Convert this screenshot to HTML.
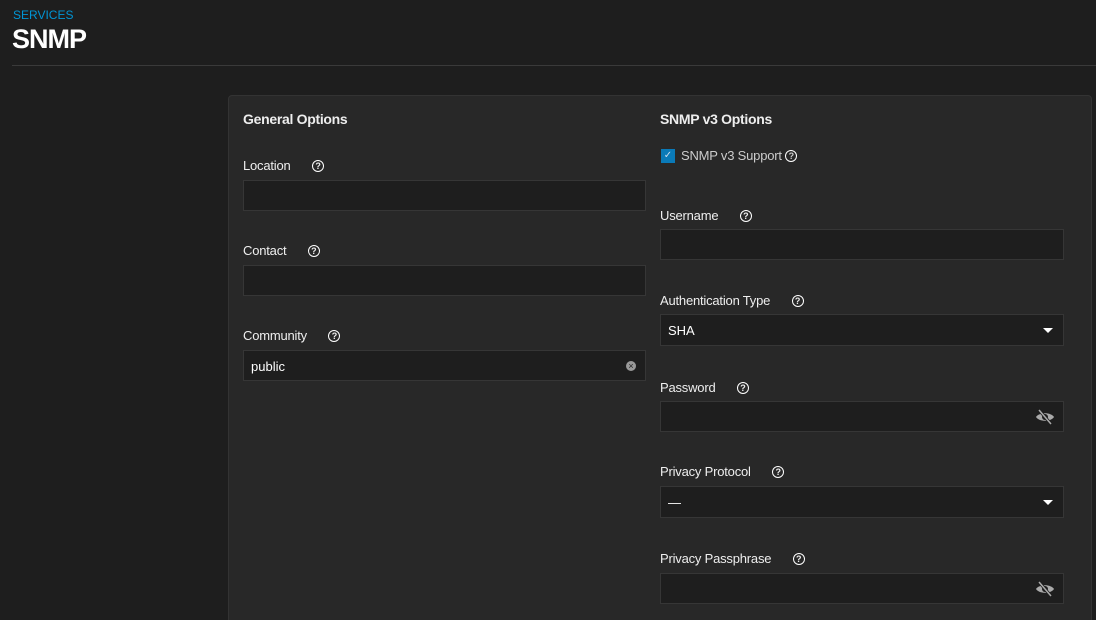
<!DOCTYPE html>
<html style="overflow:hidden;height:620px"><head><style>
body{margin:0;width:1096px;height:620px;background:#1e1e1e;font-family:"Liberation Sans",sans-serif;color:#fff;overflow:hidden;position:relative}
.a{position:absolute}
.sv{left:13px;top:8px;font-size:12px;color:#0095d5}
.t{left:12px;top:24px;font-size:27px;font-weight:bold;letter-spacing:-1px}
.hr{left:12px;top:65px;width:1084px;height:1px;background:#3a3a3a}
.card{left:228px;top:95px;width:862px;height:540px;background:#282828;border:1px solid #333;border-radius:4px}
.h{font-size:14px;font-weight:bold;color:#eee;letter-spacing:-.3px}
.l{font-size:13px;color:#eee;letter-spacing:-.2px}
.q{display:inline-block;width:10px;height:10px;border:1.5px solid #fff;border-radius:50%;font-size:9px;line-height:10px;text-align:center;font-weight:bold;vertical-align:1px}
.in{background:#1e1e1e;border:1px solid #363636;height:29px;box-sizing:border-box}
.v{font-size:13px;color:#fff;padding:8px 7px}
.arr{position:absolute;right:10px;top:13px;border-left:5px solid transparent;border-right:5px solid transparent;border-top:5px solid #fff}
</style></head><body>
<div class="a sv">SERVICES</div>
<div class="a t">SNMP</div>
<div class="a hr"></div>
<div class="a card"></div>
<div class="a h" style="left:243px;top:111px">General Options</div>
<div class="a l" style="left:243px;top:158px">Location <span class="q" style="margin-left:18px">?</span></div>
<div class="a in" style="left:243px;top:180px;width:403px;height:31px"></div>
<div class="a l" style="left:243px;top:243px">Contact <span class="q" style="margin-left:18px">?</span></div>
<div class="a in" style="left:243px;top:265px;width:403px;height:31px"></div>
<div class="a l" style="left:243px;top:328px">Community <span class="q" style="margin-left:18px">?</span></div>
<div class="a in v" style="left:243px;top:350px;width:403px;height:31px">public<span style="position:absolute;right:9px;top:10px;width:10px;height:10px;border-radius:50%;background:#999;color:#222;font-size:9px;line-height:10px;text-align:center">×</span></div>

<div class="a h" style="left:660px;top:111px">SNMP v3 Options</div>
<div class="a" style="left:661px;top:149px;width:14px;height:14px;background:#0a7ab8;color:#cde;font-size:10px;line-height:14px;text-align:center">✓</div>
<div class="a l" style="left:681px;top:148px;color:#ccc">SNMP v3 Support&nbsp;<span class="q">?</span></div>
<div class="a l" style="left:660px;top:208px">Username <span class="q" style="margin-left:18px">?</span></div>
<div class="a in" style="left:660px;top:229px;width:404px;height:31px"></div>
<div class="a l" style="left:660px;top:293px">Authentication Type <span class="q" style="margin-left:18px">?</span></div>
<div class="a in v" style="left:660px;top:314px;width:404px;height:32px">SHA<div class="arr"></div></div>
<div class="a l" style="left:660px;top:380px">Password <span class="q" style="margin-left:18px">?</span></div>
<div class="a in" style="left:660px;top:401px;width:404px;height:31px"><svg style="position:absolute;right:8px;top:6px" width="20" height="18" viewBox="0 0 20 18"><path d="M1 9C4 4 16 4 19 9C16 14 4 14 1 9Z" fill="#aaa"/><circle cx="10" cy="9" r="3" fill="#1e1e1e"/><path d="M4 2L16 16" stroke="#1e1e1e" stroke-width="3"/><path d="M4 2L16 16" stroke="#aaa" stroke-width="1.5"/></svg></div>
<div class="a l" style="left:660px;top:464px">Privacy Protocol <span class="q" style="margin-left:18px">?</span></div>
<div class="a in v" style="left:660px;top:486px;width:404px;height:32px">—<div class="arr"></div></div>
<div class="a l" style="left:660px;top:551px">Privacy Passphrase <span class="q" style="margin-left:18px">?</span></div>
<div class="a in" style="left:660px;top:573px;width:404px;height:31px"><svg style="position:absolute;right:8px;top:6px" width="20" height="18" viewBox="0 0 20 18"><path d="M1 9C4 4 16 4 19 9C16 14 4 14 1 9Z" fill="#aaa"/><circle cx="10" cy="9" r="3" fill="#1e1e1e"/><path d="M4 2L16 16" stroke="#1e1e1e" stroke-width="3"/><path d="M4 2L16 16" stroke="#aaa" stroke-width="1.5"/></svg></div>
</body></html>
